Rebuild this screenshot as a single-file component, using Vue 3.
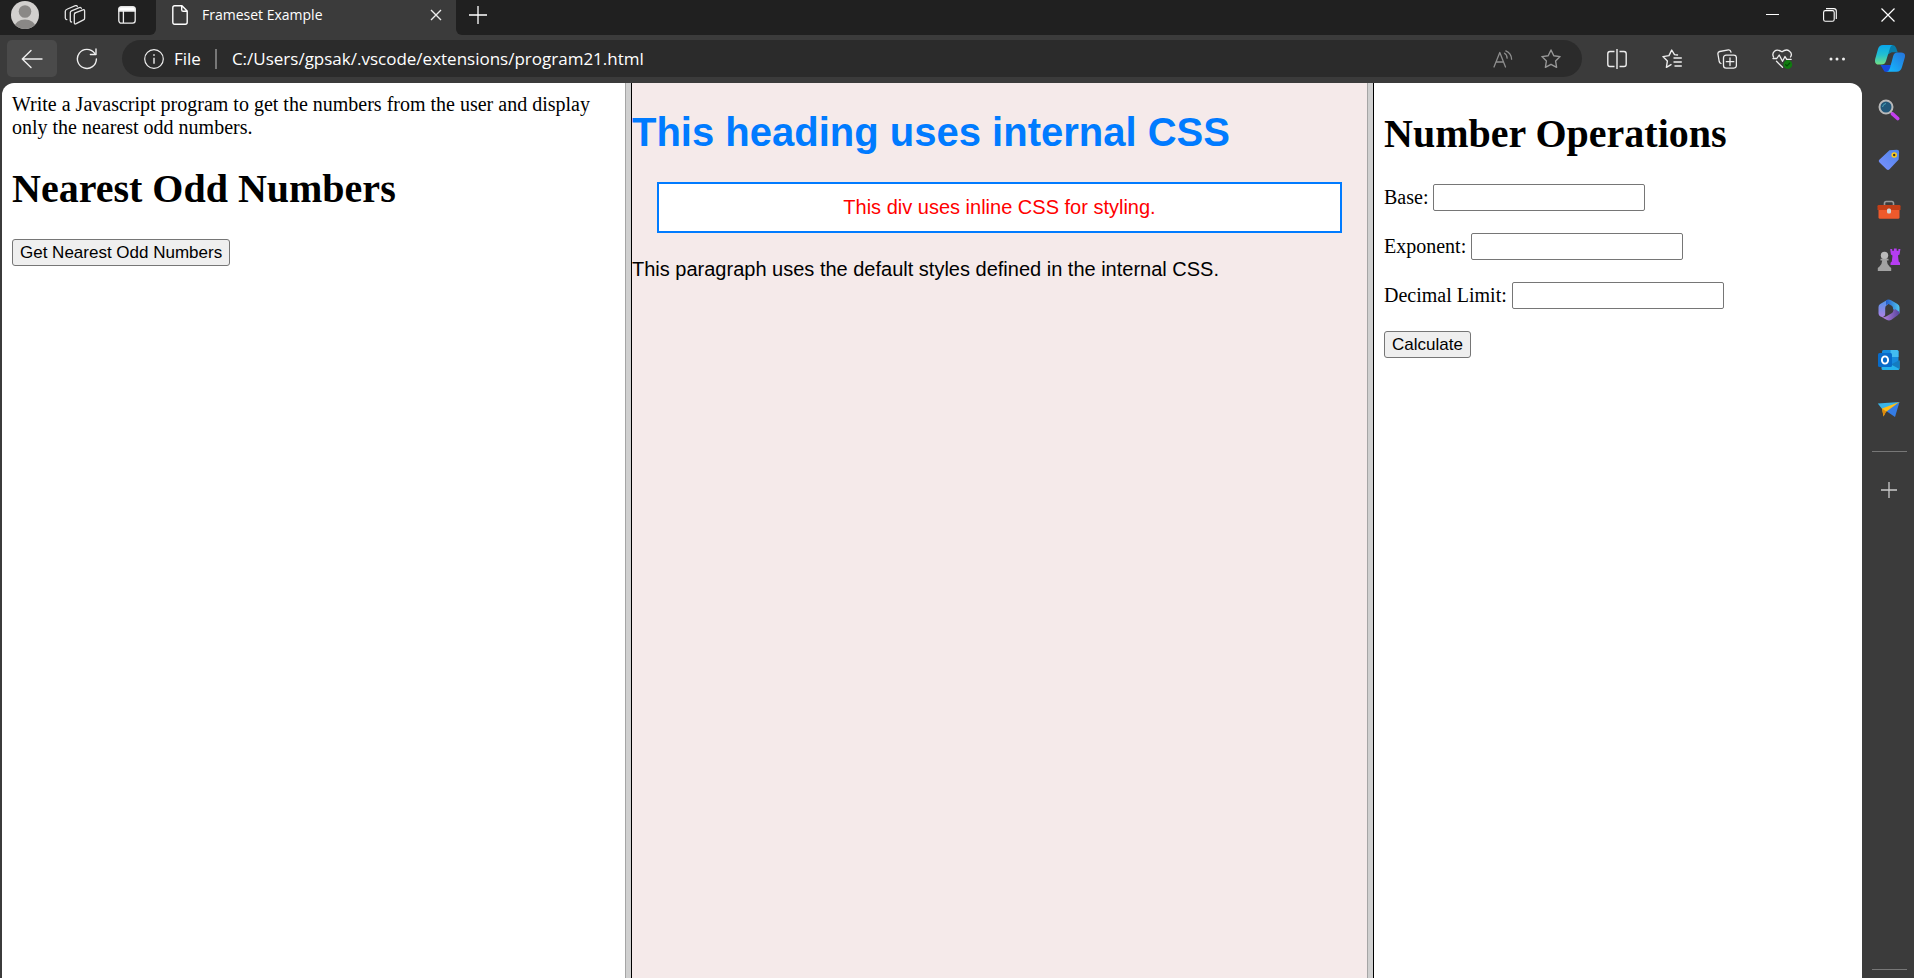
<script setup>
import { ref } from 'vue'

const fields = [
  { id: 'base', label: 'Base:' },
  { id: 'exponent', label: 'Exponent:' },
  { id: 'limit', label: 'Decimal Limit:' },
]
const values = ref({ base: '', exponent: '', limit: '' })
</script>

<template>
  <div class="browser">
    <header class="tabs">
      <div class="tabs-left">
        <button class="ic avatar" aria-label="Profile">
          <svg width="28" height="28" viewBox="0 0 28 28"><defs><clipPath id="av"><circle cx="14" cy="14" r="14" /></clipPath></defs><g clip-path="url(#av)"><rect width="28" height="28" fill="#d2d0ce" /><circle cx="14" cy="10.500" r="6.300" fill="#8a8886" /><ellipse cx="14" cy="26" rx="10.500" ry="7.500" fill="#8a8886" /></g></svg>
        </button>
        <button class="ic work" aria-label="Workspaces">
          <svg width="22" height="22" viewBox="0 0 22 22" fill="none" stroke="#e4e4e4" stroke-width="1.300" stroke-linejoin="round" stroke-linecap="round"><path d="M10.500 9.200 19 5.800q1.600-.5 1.600 1.100v7.300q0 1.200-1.100 1.700l-7.300 3.800q-1.900.9-1.900-.9v-8q0-1.200 1.100-1.600z" /><path d="M17.300 4.500q-.3-1.600-2-.9L7.500 6.900q-1.200.5-1.200 1.700v8.200q0 1.200 1.300 1.200" /><path d="M13.300 2.600q-.4-1.500-1.900-.9L3.500 5Q1.300 5.900 1.300 7.300V14q0 1.500 1.500 1.700" /></svg>
        </button>
        <button class="ic panel" aria-label="Tab actions">
          <svg width="18" height="18" viewBox="0 0 18 18" fill="none" stroke="#eee" stroke-width="1.300"><rect x=".8" y=".8" width="16.400" height="16.400" rx="2.600" /><path d="M5.400 4v13" /><path d="M1 5V3.300Q1 1 3.300 1h11.400Q17 1 17 3.300V5z" fill="#fff" /></svg>
        </button>
      </div>
      <div class="tab">
        <svg width="16" height="20" viewBox="0 0 16 20" fill="none" stroke="#fff" stroke-width="1.400" stroke-linejoin="round"><path d="M2.700.8H10l5.200 5.200v11.300q0 1.900-1.900 1.900H2.700Q.8 19.200.8 17.300V2.700Q.8.8 2.700.8zM9.700.8v3.900q0 1.600 1.600 1.600h3.900" /></svg>
        <span class="title">Frameset Example</span>
        <button class="ic" aria-label="Close tab"><svg width="12" height="12" viewBox="0 0 12 12" stroke="#eee" stroke-width="1.400"><path d="M1 1l10 10M11 1 1 11" /></svg></button>
      </div>
      <div class="tabs-right">
        <button class="ic" aria-label="New tab"><svg width="18" height="18" viewBox="0 0 18 18" stroke="#fff" stroke-width="1.300"><path d="M9 0v18M0 9h18" /></svg></button>
        <div class="window">
          <button class="ic" aria-label="Minimize"><svg width="13" height="14" viewBox="0 0 13 14" stroke="#fff"><path d="M0 6.500h13" /></svg></button>
          <button class="ic" aria-label="Restore"><svg width="14" height="14" viewBox="0 0 14 14" fill="none" stroke="#fff" stroke-width="1.100"><rect x=".6" y="2.600" width="10.600" height="10.600" rx="1.800" /><path d="M3 .6h7.800q2.500 0 2.500 2.500v7.800" /></svg></button>
          <button class="ic" aria-label="Close"><svg width="14" height="14" viewBox="0 0 14 14" stroke="#fff" stroke-width="1.200"><path d="M.5.5l13 13M13.500.5l-13 13" /></svg></button>
        </div>
      </div>
    </header>

    <nav class="toolbar">
      <button class="ic back" aria-label="Back"><svg width="22" height="20" viewBox="0 0 22 20" fill="none" stroke="#eee" stroke-width="1.400" stroke-linecap="round" stroke-linejoin="round"><path d="M21 10H1.500M10 1.500 1.300 10l8.700 8.500" /></svg></button>
      <button class="ic reload" aria-label="Refresh"><svg width="22" height="22" viewBox="0 0 22 22" fill="none" stroke="#eee" stroke-width="1.400" stroke-linecap="round" stroke-linejoin="round"><path d="M20.400 11A9.500 9.500 0 1 1 18.500 5.200M20 1v5.500h-5.600" /></svg></button>
      <div class="address">
        <svg width="20" height="20" viewBox="0 0 20 20" fill="none" stroke="#eee" stroke-width="1.200"><circle cx="10" cy="10" r="9.300" /><path d="M10 8.800v6" stroke-width="1.400" /><circle cx="10" cy="6" r=".6" fill="#eee" stroke-width=".6" /></svg>
        <span class="scheme">File</span>
        <input class="url" aria-label="Address" value="C:/Users/gpsak/.vscode/extensions/program21.html">
        <button class="ic" aria-label="Read aloud"><svg width="20" height="18" viewBox="0 0 20 18" fill="none" stroke="#8e8e8e" stroke-width="1.300" stroke-linecap="round" stroke-linejoin="round"><path d="M1 17 6.800 2.500 12.500 17M3 12h7.600M11.500 3.200q2.600 1.600 2.600 5M12.800.9q5.500 2.300 5.800 8.300" /></svg></button>
        <button class="ic" aria-label="Favorite"><svg width="20" height="20" viewBox="0 0 20 20" fill="none" stroke="#989898" stroke-width="1.400" stroke-linejoin="round"><path d="M10 1l2.800 5.700 6.300.9-4.500 4.400 1 6.300L10 15.300l-5.600 3 1-6.300L.9 7.600l6.300-.9z" /></svg></button>
      </div>
      <div class="tools">
        <button class="ic" aria-label="Split screen"><svg width="20" height="20" viewBox="0 0 20 20" fill="none" stroke="#eee" stroke-width="1.400"><path d="M7.500 2.500H3Q.8 2.500.8 4.700v10.600q0 2.200 2.200 2.200h4.500M12.500 2.500H17q2.200 0 2.200 2.200v10.600q0 2.200-2.200 2.200h-4.500M10 0v20" /></svg></button>
        <button class="ic" aria-label="Favorites"><svg width="20" height="20" viewBox="0 0 20 20" fill="none" stroke="#eee" stroke-width="1.400" stroke-linejoin="round" stroke-linecap="round"><path d="M15.500 6 12.500 5.600 9.700 1 7 6.600.9 7.600l4.500 4.300-1 6.400L9 15.600M12 9h7.300M12 13h7.300M13 17h6.300" /></svg></button>
        <button class="ic" aria-label="Collections"><svg width="20" height="20" viewBox="0 0 20 20" fill="none" stroke="#eee" stroke-width="1.300" stroke-linejoin="round" stroke-linecap="round"><path d="M4 14.500q-1.500-.6-1.800-2L.9 5Q.7 3 2.700 2.500L11.500.8q2-.2 2.500 2.300" /><rect x="6.500" y="6.200" width="12.900" height="12.900" rx="2.600" /><path d="M13 9v7.500M9.300 12.700h7.500" /></svg></button>
        <button class="ic" aria-label="Browser essentials"><svg width="21" height="20" viewBox="0 0 21 20" fill="none" stroke="#eee" stroke-width="1.300" stroke-linejoin="round" stroke-linecap="round"><path d="M1.500 8Q-.2 4.500 2.500 2.200T10 2.800q4.300-3.200 7.500-.6T18.500 8M1 9.500h3.800L7.200 6l3.300 6.300 2.500-4.800 1.700 2.800h4.500M4.500 12.300l6 6" /><circle cx="15.800" cy="15.500" r="4.400" fill="#107c10" stroke="none" /><path d="M13.700 15.700l1.300 1.200 2.700-2.800" stroke="#064b06" /></svg></button>
        <button class="ic" aria-label="Settings and more"><svg width="20" height="20" viewBox="0 0 20 20" fill="#eee"><circle cx="3" cy="10" r="1.500" /><circle cx="9" cy="10" r="1.500" /><circle cx="15.500" cy="10" r="1.500" /></svg></button>
      </div>
      <button class="ic copilot" aria-label="Copilot"><svg width="30" height="27" viewBox="0 0 30 27"><defs><linearGradient id="ca" x1="0" y1="0" x2="0" y2="1"><stop stop-color="#08a6ed" /><stop offset=".5" stop-color="#22bfd0" /><stop offset="1" stop-color="#72df83" /></linearGradient><linearGradient id="cb" x1="1" y1="0" x2="0" y2="1"><stop stop-color="#2672da" /><stop offset="1" stop-color="#13bdff" /></linearGradient></defs><path d="M14.500 0h3q2.600 0 3.700 3l1.500 4.200h-6L12 10z" fill="#087ca9" /><path d="M5.500 20h10l2-3-2 7q-.9 3-4 3-2.500 0-3.300-2.500z" fill="#1649dc" /><path d="M8 0h9.500q-1.800.6-2.500 3l-4 13q-1 3.600-4.500 3.600H3.800Q-.9 19.600.2 14L3 4Q4.200 0 8 0z" fill="url(#ca)" /><path d="M22 7.400h4q5 0 3.800 5L27 22q-1.200 4.700-5.500 4.700h-10q2.600-.5 3.500-3.700l3.200-12q.9-3.600 3.800-3.600z" fill="url(#cb)" /></svg></button>
    </nav>

    <div class="body">
      <main class="frames">
        <section class="frame serif">
          <p>Write a Javascript program to get the numbers from the user and display only the nearest odd numbers.</p>
          <h1>Nearest Odd Numbers</h1>
          <button class="native">Get Nearest Odd Numbers</button>
        </section>
        <div class="divider"></div>
        <section class="frame internal">
          <h1>This heading uses internal CSS</h1>
          <div class="box">This div uses inline CSS for styling.</div>
          <p>This paragraph uses the default styles defined in the internal CSS.</p>
        </section>
        <div class="divider"></div>
        <section class="frame serif">
          <h1>Number Operations</h1>
          <form @submit.prevent>
            <div v-for="f in fields" :key="f.id" class="row">
              <label :for="f.id">{{ f.label }}</label>
              <input :id="f.id" v-model="values[f.id]" type="text">
            </div>
            <button class="native">Calculate</button>
          </form>
        </section>
      </main>

      <aside class="side">
        <div class="apps">
          <button class="ic" aria-label="Search"><svg width="22" height="22" viewBox="0 0 22 22"><path d="M13 13l3 3" stroke="#aaa" stroke-width="2" /><circle cx="8" cy="8" r="6.500" fill="#225779" stroke="#b9b9b9" stroke-width="2" /><path d="M4.500 8q.5-3 3.500-3.500" fill="none" stroke="#4ba6bc" /><path d="M14.500 14.800l5.200 4.700" stroke="#c43fee" stroke-width="3.600" stroke-linecap="round" /></svg></button>
          <button class="ic" aria-label="Shopping"><svg width="22" height="22" viewBox="0 0 22 22"><defs><linearGradient id="tg" x1="1" y1="0" x2="0" y2="1"><stop stop-color="#4e84e8" /><stop offset="1" stop-color="#7b91ff" /></linearGradient></defs><path d="M11.500 1.300 19 .8q2.200 0 2.100 2.200l-.4 7.500-9.200 9.800q-1.500 1.500-3 0L1.500 13.500Q0 12 1.300 10.700z" fill="url(#tg)" /><circle cx="16.200" cy="6" r="2" fill="#333" stroke="#ffcc18" stroke-width="1.600" /></svg></button>
          <button class="ic" aria-label="Tools"><svg width="24" height="20" viewBox="0 0 24 20"><path d="M7.500 6V3.200q0-1.700 1.700-1.700h5.600q1.700 0 1.700 1.700V6" fill="none" stroke="#999" stroke-width="1.600" /><rect x="1.500" y="8" width="21" height="10.800" rx="1.500" fill="#ee5a2c" /><path d="M1.800 5h20.400q1.300 0 1.300 1.300V10H.5V6.300Q.5 5 1.800 5z" fill="#c43e16" /><rect x="10" y="8.500" width="4" height="5" rx="1.500" fill="#d4d4d4" /></svg></button>
          <button class="ic" aria-label="Games"><svg width="24" height="24" viewBox="0 0 24 24"><path d="M13.200 1h2v1.800h1.700V.5h2.800v2.300h1.700V1h2l-.8 5.500-1.600 1 .7 6 1.300 1.200V17h-9.500v-2.300l1.300-1.200.7-6-1.600-1z" fill="#b63df2" /><circle cx="7.500" cy="7.500" r="3.700" fill="#bababa" /><path d="M3.500 10.800h8v1.600H9.800q.2 3.800 2.700 6l1.700 1.600V23H.8v-3l1.700-1.600q2.500-2.200 2.700-6H3.500z" fill="#a2a2a2" /></svg></button>
          <button class="ic" aria-label="Microsoft 365"><svg width="22" height="22" viewBox="0 0 22 22"><defs><linearGradient id="ma" x1="0" y1="0" x2="0" y2="1"><stop stop-color="#4f96e8" /><stop offset="1" stop-color="#ae80e5" /></linearGradient><linearGradient id="mb"><stop stop-color="#245cca" /><stop offset="1" stop-color="#51c6ee" /></linearGradient><linearGradient id="mc"><stop stop-color="#ba83df" /><stop offset="1" stop-color="#56459f" /></linearGradient></defs><path d="M9.500.8 2.200 5Q.5 6 .5 8v6.500q0 2 2 3l2 .8q2.700-.5 2.700-3V9q0-2 1.800-3l1-.7z" fill="url(#ma)" /><path d="M8 1.300q2.500-1.700 5 0l6.500 3.800q2 1.200 2 3.200v6.200L15 10.300V9q0-1.500-1.300-2.300L10.500 5 8 6z" fill="url(#mb)" /><path d="M21.500 13q.1 2-1.500 3l-6.500 4.800q-2.500 1.400-5 0L4 18.200q2.200.5 4.500-1L14 14q1.300-.8 1.200-2.500l2-1.500z" fill="url(#mc)" /></svg></button>
          <button class="ic" aria-label="Outlook"><svg width="22" height="22" viewBox="0 0 22 22"><rect x="4" y="1" width="16.500" height="15" rx="1.500" fill="#168bdd" /><path d="M12.500 1H19q1.500 0 1.500 1.500V8h-8z" fill="#42bcf1" /><path d="M3.500 12 12 17l9.500-5v7.500q0 1.500-1.500 1.500H5q-1.500 0-1.500-1.500z" fill="#25b3ec" /><path d="M13 15.500l8.500-4.500v9z" fill="#147bc0" /><rect x="0" y="4" width="14" height="14" rx="1.500" fill="#086bc9" /><ellipse cx="7" cy="11" rx="3.100" ry="3.600" fill="none" stroke="#fff" stroke-width="1.900" /></svg></button>
          <button class="ic" aria-label="Drop"><svg width="24" height="20" viewBox="0 0 24 20"><path d="M.8 3.500 22.500 2 7 11.500z" fill="#39b5e9" /><path d="M22.500 2 8.500 10.500 18 17z" fill="#347ce5" /><path d="M22.500 2 5 8.500l1.500 8L8.800 12z" fill="#ffbd17" /><path d="M5 8.500l1.500 8 2.700-5z" fill="#dc890d" /></svg></button>
        </div>
        <hr>
        <button class="ic add" aria-label="Customize"><svg width="16" height="16" viewBox="0 0 16 16" stroke="#ccc" stroke-width="1.300"><path d="M8 0v16M0 8h16" /></svg></button>
        <hr class="last">
      </aside>
    </div>
  </div>
</template>

<style>
body { margin: 0; background: #3b3b3b; }
</style>

<style scoped>
.browser { display: flex; flex-direction: column; height: 100vh; overflow: hidden; background: #3b3b3b; font-family: "Open Sans", "Noto Sans", sans-serif; color: #fff; }
.ic { display: flex; align-items: center; justify-content: center; flex: none; padding: 0; border: 0; background: none; }
svg { display: block; flex: none; }

.tabs { display: flex; height: 35px; flex: none; }
.tabs-left, .tabs-right { display: flex; align-items: flex-start; background: #202020; box-sizing: border-box; }
.tabs-left { width: 156px; padding-left: 11px; border-radius: 0 0 6px 0; }
.avatar { margin-top: 1px; }
.work { margin: 4px 0 0 25px; }
.panel { margin: 6px 0 0 32px; }
.tab { display: flex; align-items: center; width: 300px; height: 30px; padding: 0 14px 0 16px; box-sizing: border-box; }
.title { flex: 1; margin-left: 14px; font-size: 14px; line-height: 20px; }
.tabs-right { flex: 1; justify-content: space-between; padding: 6px 19px 0 13px; border-radius: 0 0 0 6px; }
.window { display: flex; gap: 44px; padding-top: 2px; }

.toolbar { display: flex; align-items: center; height: 48px; flex: none; padding: 0 9px 1px 7px; box-sizing: border-box; }
.back { width: 50px; height: 37px; border-radius: 5px; background: #4a4a4a; }
.reload { margin: 0 24px 0 19px; }
.address { display: flex; flex: 1; align-items: center; gap: 28px; height: 37px; padding: 0 21px 0 22px; box-sizing: border-box; border-radius: 19px; background: #2b2b2b; font-size: 17px; }
.scheme { margin-left: -18px; padding-right: 14px; border-right: 2px solid #777; line-height: 20px; }
.url { flex: 1; min-width: 0; margin-left: -13px; padding: 0; border: 0; outline: 0; background: none; color: #fff; font: inherit; }
.tools { display: flex; gap: 35px; margin: 0 27px 0 25px; }

.body { display: flex; flex: 1; min-height: 0; }
.frames { display: grid; flex: 1; grid-template-columns: 623fr 7px 735fr 7px 488fr; margin-left: 2px; overflow: hidden; border-radius: 12px 12px 0 0; background: #fff; color: #000; }
.frame { min-width: 0; box-sizing: border-box; font-size: 20px; line-height: 23px; }
.divider { box-sizing: border-box; border-left: 1px solid #a5a5a5; border-right: 1px solid #000; background: #d0d0d0; }
.serif { padding: 10px; font-family: "Liberation Serif", "Times New Roman", serif; }
.serif p { margin: 0; }
h1 { margin: 27px 0; font-size: 40px; line-height: 46px; }
.serif > h1:first-child { margin-top: 18px; }
.native { height: 27px; padding: 0 7px; border: 1px solid #767676; border-radius: 3px; background: #efefef; color: #000; font-family: "Liberation Sans", Arial, sans-serif; font-size: 17px; line-height: 20px; }
.row { display: flex; align-items: center; gap: 5px; height: 27px; margin-bottom: 22px; }
.row input { width: 212px; height: 27px; box-sizing: border-box; border: 1px solid #767676; border-radius: 2px; background: #fff; font-size: 17px; }
.internal { background: #f5eaea; font-family: "Liberation Sans", Arial, sans-serif; }
.internal h1 { margin-top: 26px; color: #007bff; }
.box { margin: 25px; padding: 12px; border: 2px solid #007bff; background: #fff; color: #f00; text-align: center; }
.internal p { margin: 25px 0; }

.side { display: flex; flex-direction: column; align-items: center; width: 52px; flex: none; padding: 2px 0 0 2px; box-sizing: border-box; }
.apps { display: flex; flex-direction: column; }
.apps .ic { height: 50px; }
hr { width: 35px; height: 1px; flex: none; margin: 16px 0 0; border: 0; background: #777; }
.add { margin-top: 30px; }
.last { margin: auto 0 8px; }
</style>
